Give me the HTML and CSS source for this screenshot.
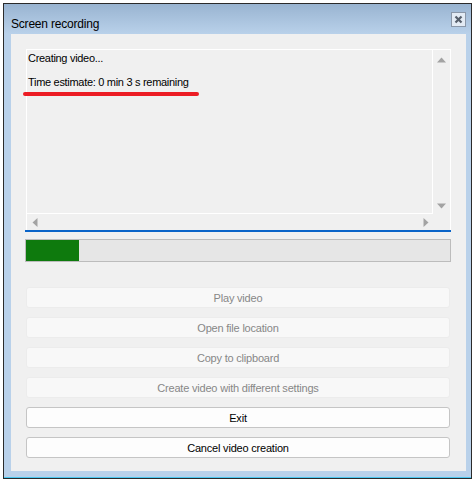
FILE: index.html
```html
<!DOCTYPE html>
<html>
<head>
<meta charset="utf-8">
<link rel="stylesheet" href="styles.css">
</head>
<body>
<div class="window">
  <div class="titlebar">
    <span class="title">Screen recording</span>
    <span class="close">
      <svg width="13" height="13" viewBox="0 0 13 13"><path d="M3.5 3.5 L9.5 9.5 M9.5 3.5 L3.5 9.5" stroke="#565f6b" stroke-width="2.2" fill="none"/></svg>
    </span>
  </div>
  <div class="client">
    <div class="textbox">
      <div class="tb-inner">
        <div class="tb-text">
          <p>Creating video...</p>
          <p>Time estimate: 0 min 3 s remaining</p>
        </div>
        <div class="vscroll">
          <svg width="9" height="6" viewBox="0 0 9 6"><path d="M0 5.5 L4.5 0.5 L9 5.5 Z" fill="#a3a3a3"/></svg>
          <svg width="9" height="6" viewBox="0 0 9 6"><path d="M0 0.5 L4.5 5.5 L9 0.5 Z" fill="#a3a3a3"/></svg>
        </div>
        <div class="hscroll">
          <svg width="6" height="9" viewBox="0 0 6 9"><path d="M5.5 0 L0.5 4.5 L5.5 9 Z" fill="#a3a3a3"/></svg>
          <svg width="6" height="9" viewBox="0 0 6 9"><path d="M0.5 0 L5.5 4.5 L0.5 9 Z" fill="#a3a3a3"/></svg>
        </div>
        <div class="corner"></div>
      </div>
      <span class="annotation"></span>
    </div>
    <div class="progress"><div class="fill" style="width:12.5%"></div></div>
    <div class="buttons">
      <button class="btn" disabled>Play video</button>
      <button class="btn" disabled>Open file location</button>
      <button class="btn" disabled>Copy to clipboard</button>
      <button class="btn" disabled>Create video with different settings</button>
      <button class="btn">Exit</button>
      <button class="btn">Cancel video creation</button>
    </div>
  </div>
</div>
</body>
</html>
```
FILE: styles.css
```css
html, body {
  margin: 0;
  padding: 0;
  background: #ffffff;
}
body {
  font-family: "Liberation Sans", Arial, sans-serif;
  font-size: 11px;
  color: #000;
}
.window {
  margin: 3px 0 0 3px;
  width: 469px;
  height: 476px;
  box-sizing: border-box;
  border: 1px solid #2b2b2b;
  background: #b9d1ea;
  display: flex;
  flex-direction: column;
  box-shadow: inset 0 -1px 0 #4cc8f0;
}
.titlebar {
  height: 30px;
  flex: none;
  display: flex;
  justify-content: space-between;
  align-items: flex-start;
  background: linear-gradient(to bottom, #99b4d1, #b9d1ea);
  padding-left: 7px;
  padding-right: 5px;
}
.title {
  font-size: 12px;
  line-height: 14px;
  margin-top: 13px;
  letter-spacing: -0.2px;
  color: #000;
}
.close {
  margin-top: 8px;
  width: 15px;
  height: 15px;
  box-sizing: border-box;
  border: 1px solid #8a97a8;
  background: #e3ebf4;
  display: flex;
  align-items: center;
  justify-content: center;
}
.client {
  margin: 0 5px 0 7px;
  height: 437px;
  background: #f0f0f0;
  display: flex;
  flex-direction: column;
}
.textbox {
  position: relative;
  margin: 15px 15px 0 14px;
  border-bottom: 2px solid #0a64c8;
  padding-left: 1px;
}
.tb-inner {
  border: 1px solid #ffffff;
  border-bottom: 0;
  height: 180px;
  display: grid;
  grid-template-columns: 1fr 17px;
  grid-template-rows: 1fr 16px;
}
.tb-text {
  border-right: 1px solid #ffffff;
  border-bottom: 1px solid #ffffff;
  padding: 2px 1px 0 1px;
  letter-spacing: -0.3px;
}
.tb-text p {
  margin: 0 0 11px 0;
  line-height: 13px;
}
.vscroll {
  display: flex;
  flex-direction: column;
  justify-content: space-between;
  align-items: center;
  padding: 7px 0 5px 0;
}
.hscroll {
  display: flex;
  justify-content: space-between;
  align-items: center;
  padding: 0 4px 0 5px;
}
.annotation {
  position: absolute;
  left: -2px;
  top: 43px;
  width: 176px;
  height: 4px;
  border-radius: 2px;
  background: #ec1c24;
}
.progress {
  margin: 7px 15px 0 14px;
  height: 23px;
  box-sizing: border-box;
  border: 1px solid #bcbcbc;
  background: #e6e6e6;
}
.fill {
  height: 100%;
  background: #0e7a0d;
}
.buttons {
  margin: 25px 16px 0 15px;
  display: flex;
  flex-direction: column;
  gap: 9px;
}
.btn {
  height: 21px;
  box-sizing: border-box;
  border: 1px solid #c5c5c5;
  border-radius: 3px;
  background: #fdfdfd;
  font-family: "Liberation Sans", Arial, sans-serif;
  font-size: 11px;
  letter-spacing: -0.2px;
  color: #000;
  padding: 0;
}
.btn:disabled {
  border-color: #ececec;
  background: #f8f8f8;
  color: #878787;
}
```
